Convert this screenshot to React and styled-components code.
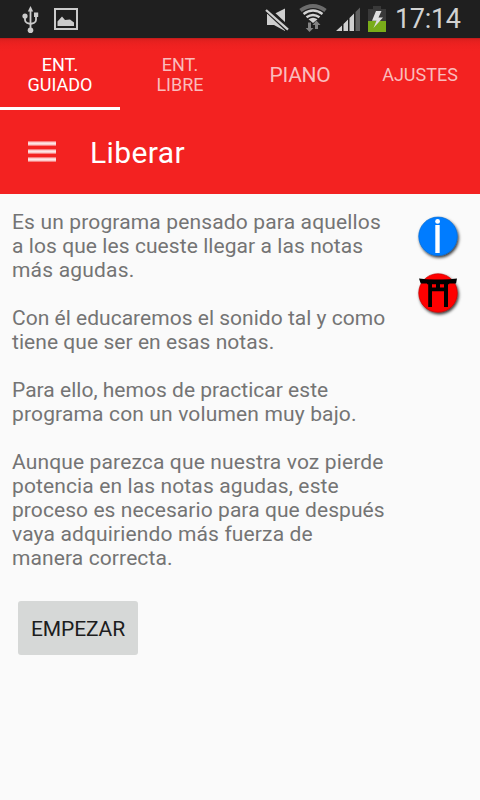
import React from "react";
import styled, { createGlobalStyle } from "styled-components";

const GlobalStyle = createGlobalStyle`
  *, *::before, *::after { box-sizing: border-box; }
  body { margin: 0; background: #fafafa; font-family: Roboto, sans-serif; }
`;

const Screen = styled.div`
  width: 480px;
  height: 800px;
  display: flex;
  flex-direction: column;
  background: #fafafa;
  overflow: hidden;
`;

const StatusBar = styled.header`
  height: 38px;
  flex: none;
  display: flex;
  justify-content: space-between;
  background: #1f1f1f;
`;

const StatusIcon = styled.svg`
  display: block;
  flex: none;
`;

const StatusRight = styled.div`
  display: flex;
  width: 225px;
`;

const Clock = styled.time`
  color: #d2d2d2;
  font-size: 27px;
  line-height: 38px;
  letter-spacing: -0.3px;
  white-space: nowrap;
`;

const Tabs = styled.nav`
  height: 72px;
  flex: none;
  display: grid;
  grid-template-columns: repeat(4, 120px);
  background: linear-gradient(#b41a1a 0, #d81f1e 1px, #e5201f 3px, #ee2120 7px, #f32221 13px);
`;

const Tab = styled.button`
  border: 0;
  border-bottom: 3px solid ${(p) => (p.$active ? "#fff" : "transparent")};
  padding: 5px 0 0;
  background: none;
  color: ${(p) => (p.$active ? "#fff" : "#fabcbc")};
  font: 400 ${(p) => p.$size}px/20px Roboto, sans-serif;
  letter-spacing: ${(p) => p.$spacing || 0}px;
  text-align: center;
  white-space: pre-line;
`;

const Toolbar = styled.div`
  height: 84px;
  flex: none;
  display: flex;
  align-items: center;
  gap: 34px;
  padding-left: 28px;
  background: #f32221;
`;

const MenuButton = styled.button`
  width: 28px;
  height: 22px;
  padding: 0;
  border: 0;
  background: none;
  svg { display: block; }
`;

const Title = styled.h1`
  margin: 0;
  padding-top: 2px;
  color: #fff;
  font-size: 30px;
  font-weight: 400;
  line-height: 36px;
  letter-spacing: 0.4px;
`;

const Content = styled.main`
  display: flex;
  justify-content: space-between;
  padding: 16px 15px 0 12px;
`;

const Copy = styled.div`
  display: flex;
  flex-direction: column;
  gap: 24px;
`;

const Paragraph = styled.p`
  margin: 0;
  color: #747474;
  font-size: 21px;
  line-height: 24px;
`;

const Line = styled.span`
  display: block;
  white-space: nowrap;
  letter-spacing: ${(p) => p.$spacing}px;
`;

const Actions = styled.aside`
  display: flex;
  flex-direction: column;
  padding-top: 2px;
  gap: 5px;
`;

const RoundAction = styled.button`
  width: 52px;
  height: 52px;
  padding: 0;
  border: 0;
  background: none;
  svg { display: block; }
`;

const StartButton = styled.button`
  width: 120px;
  height: 54px;
  margin: 31px 0 0 18px;
  padding: 2px 0 0;
  border: 0;
  border-radius: 3px;
  background: #d6d8d7;
  color: #1d1d1d;
  font: 400 21px/24px Roboto, sans-serif;
  letter-spacing: -0.12px;
`;

const tabs = [
  { label: "ENT.\nGUIADO", size: 18, active: true },
  { label: "ENT.\nLIBRE", size: 18 },
  { label: "PIANO", size: 21, spacing: -0.3 },
  { label: "AJUSTES", size: 18 },
];

const paragraphs = [
  [
    ["Es un programa pensado para aquellos", 0.15],
    ["a los que les cueste llegar a las notas", 0.07],
    ["más agudas.", 0.2],
  ],
  [
    ["Con él educaremos el sonido tal y como", 0.02],
    ["tiene que ser en esas notas.", 0.05],
  ],
  [
    ["Para ello, hemos de practicar este", 0.02],
    ["programa con un volumen muy bajo.", 0.15],
  ],
  [
    ["Aunque parezca que nuestra voz pierde", 0.14],
    ["potencia en las notas agudas, este", 0.12],
    ["proceso es necesario para que después", 0.07],
    ["vaya adquiriendo más fuerza de", 0.14],
    ["manera correcta.", 0.11],
  ],
];

function Notifications() {
  return (
    <StatusIcon width="100" height="38" viewBox="0 0 100 38" aria-label="USB, imagen">
      <g fill="none" stroke="#cbcbcb" strokeWidth="1.8">
        <path d="M30.5 10V30M25 16V20Q25 22 27 22.8L30.5 24L34 22.8Q36 22 36 20V16" />
        <rect x="55" y="9" width="22" height="20" strokeWidth="2" />
      </g>
      <g fill="#cbcbcb">
        <path d="M30.5 6L33.2 11.5H27.8Z" />
        <circle cx="25" cy="16" r="2.6" />
        <rect x="34" y="12.5" width="4.2" height="4.5" />
        <circle cx="30.5" cy="30.2" r="2.8" />
        <path d="M57.5 26V21.5L62 16.5L65 20L70 19.5L74 22.5V26Z" />
      </g>
    </StatusIcon>
  );
}

function SystemIcons() {
  return (
    <StatusIcon width="140" height="38" viewBox="255 0 140 38" aria-label="Silencio, wifi, señal, batería">
      <path d="M267 14H274L285 8.5V31L274 25H267Z" fill="#cfcfcf" />
      <path d="M266.5 9L288 29" stroke="#1f1f1f" strokeWidth="6" />
      <path d="M266 10L288 29.7" stroke="#cfcfcf" strokeWidth="2.3" />
      <g fill="none">
        <path d="M300.5 10.5Q313 1.5 325.5 10.5" stroke="#6c6c6c" strokeWidth="4" />
        <path d="M303.5 14Q313 7 322.5 14M306.5 17.3Q313 12.5 319.5 17.3" stroke="#d3d3d3" strokeWidth="2.4" />
      </g>
      <path d="M308.5 19.3Q313 16.3 317.5 19.3L313 23Z" fill="#d3d3d3" />
      <path d="M308 22.5H311V28H313.5L309.5 32L305.7 28H308ZM315 29V25H312.5L316.3 20.5L320.5 25H318V29Z" fill="#838383" />
      <path d="M336 31L342 25.5V31ZM343.5 31V24L348 19.5V31ZM349.5 31V18L354 13.5V31Z" fill="#d0d0d0" />
      <path d="M355.5 31V12L360 7.5V31Z" fill="#606060" />
      <path d="M373 6H381V9H386V32H368V9H373Z" fill="#393939" />
      <path d="M368 21H386V32H368Z" fill="#79ac19" />
      <path d="M376 11H381.5L378.5 17.5H383L373.5 28L376.5 20.8H372Z" fill="#dedede" />
    </StatusIcon>
  );
}

function InfoIcon() {
  return (
    <svg width="52" height="52" viewBox="413 212 52 52">
      <defs>
        <filter id="infoShadow" x="-30%" y="-30%" width="160%" height="160%">
          <feDropShadow dx="1.2" dy="1.8" stdDeviation="1.5" floodOpacity="0.8" />
        </filter>
      </defs>
      <circle cx="438" cy="236.3" r="19.3" fill="#047cff" stroke="#0868cc" strokeWidth="0.6" filter="url(#infoShadow)" />
      <circle cx="437.6" cy="221.4" r="2.4" fill="#fff" />
      <path d="M435.3 225H439.7V253H435.3Z" fill="#fff" />
    </svg>
  );
}

function ToriiIcon() {
  return (
    <svg width="52" height="52" viewBox="413 269 52 52">
      <defs>
        <filter id="toriiShadow" x="-30%" y="-30%" width="160%" height="160%">
          <feDropShadow dx="1.2" dy="1.8" stdDeviation="1.5" floodOpacity="0.8" />
        </filter>
      </defs>
      <circle cx="438" cy="293" r="19.3" fill="#f00" stroke="#b80000" strokeWidth="0.6" filter="url(#toriiShadow)" />
      <path
        fill="#000"
        fillRule="evenodd"
        d="M419 278.6Q428 279.8 438 279.5Q448 279.8 457 278.6L456 283.5H449.2V284.2H448V307H444V291.2H432V307H428.2V284.2H427V283.5H420.7ZM432 284.3V287.6H436V284.3ZM440 284.3V287.6H444V284.3Z"
      />
    </svg>
  );
}

export default function App() {
  return (
    <>
      <GlobalStyle />
      <Screen>
        <StatusBar>
          <Notifications />
          <StatusRight>
            <SystemIcons />
            <Clock>17:14</Clock>
          </StatusRight>
        </StatusBar>
        <Tabs>
          {tabs.map((t) => (
            <Tab key={t.label} $active={t.active} $size={t.size} $spacing={t.spacing}>{t.label}</Tab>
          ))}
        </Tabs>
        <Toolbar>
          <MenuButton aria-label="Menú">
            <svg width="28" height="22" viewBox="0 0 28 22">
              <path d="M0 2.5H28M0 10.5H28M0 18.5H28" stroke="#fff" strokeOpacity="0.42" strokeWidth="5" />
              <path d="M0 2.5H28M0 10.5H28M0 18.5H28" stroke="#fff" strokeOpacity="0.8" strokeWidth="2.4" />
            </svg>
          </MenuButton>
          <Title>Liberar</Title>
        </Toolbar>
        <Content>
          <Copy>
            {paragraphs.map((lines) => (
              <Paragraph key={lines[0][0]}>
                {lines.map(([text, spacing]) => (
                  <Line key={text} $spacing={spacing}>{text} </Line>
                ))}
              </Paragraph>
            ))}
          </Copy>
          <Actions>
            <RoundAction aria-label="Información"><InfoIcon /></RoundAction>
            <RoundAction aria-label="Programa"><ToriiIcon /></RoundAction>
          </Actions>
        </Content>
        <StartButton>EMPEZAR</StartButton>
      </Screen>
    </>
  );
}
